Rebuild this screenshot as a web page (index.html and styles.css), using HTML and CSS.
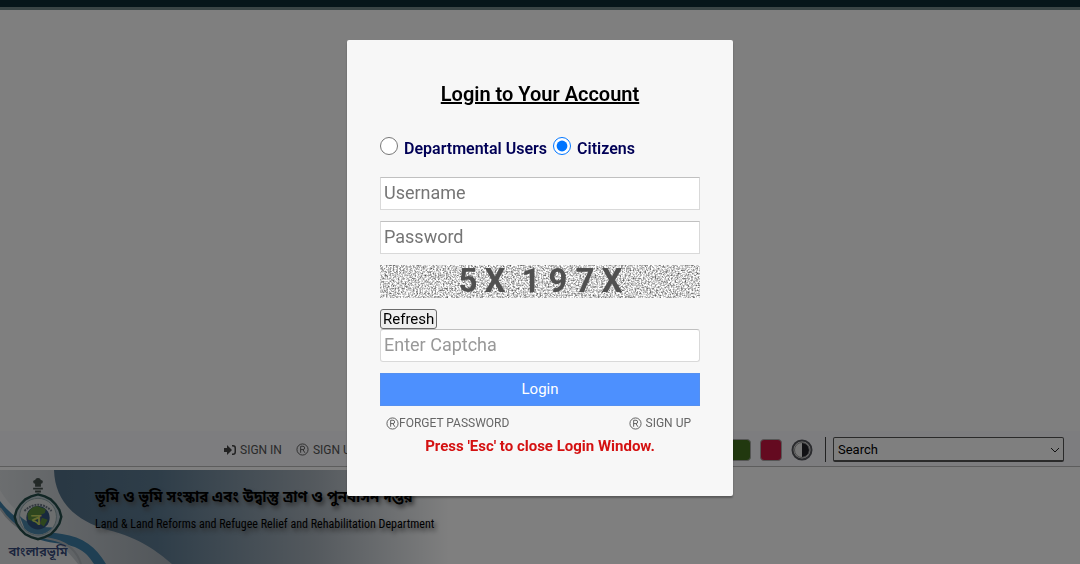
FILE: index.html
```html
<!DOCTYPE html>
<html lang="en">
<head>
  <meta charset="UTF-8" />
  <meta name="viewport" content="width=device-width, initial-scale=1.0"/>
  <title>Banglarbhumi</title>
  <link rel="stylesheet" href="styles.css">
</head>
<body>
  <div class="page">
    <div class="top-strip"></div>
    <div class="hero"></div>

    <nav class="toolbar">
      <div class="account-links">
        <a href="#signin">
          <svg class="sign-icon" viewBox="0 0 12 12"><path d="M0 4h3V1l5 5-5 5V8H0zM8 1h1a3 3 0 0 1 3 3v4a3 3 0 0 1-3 3H8V9.500h1a1.500 1.500 0 0 0 1.500-1.500V4A1.500 1.500 0 0 0 9 2.500H8z"/></svg>
          SIGN IN
        </a>
        <a href="#signup">
          <svg class="reg-icon" viewBox="0 0 14 14"><circle cx="7" cy="7" r="6"/><path d="M5 10.500V3.500h2.500a1.800 1.800 0 0 1 0 3.600H5M7.500 7.100l2 3.400"/></svg>
          SIGN UP
        </a>
      </div>
      <div class="tools">
        <button class="swatch green" aria-label="Green theme"></button>
        <button class="swatch red" aria-label="Red theme"></button>
        <button class="contrast" aria-label="Contrast">
          <svg viewBox="0 0 22 22"><circle cx="11" cy="11" r="9.500" fill="#eee" stroke="#55565c" stroke-width="2"/><circle cx="11" cy="11" r="7.500" fill="none" stroke="#999" stroke-width="1"/><path d="M11 4a7 7 0 0 1 0 14z" fill="#222229"/></svg>
        </button>
        <div class="search-wrap">
          <select class="search" aria-label="Search">
            <option>Search</option>
          </select>
          <svg class="arrow" viewBox="0 0 10 6"><path d="M1 1l4 4 4-4"/></svg>
        </div>
      </div>
    </nav>

    <header class="banner">
      <svg class="banner-art" viewBox="0 0 450 94">
        <defs>
          <linearGradient id="sky" x1="0" x2="1" y1="0" y2="0">
            <stop offset="0" stop-color="#4c6a82"/>
            <stop offset="0.350" stop-color="#5d7b92"/>
            <stop offset="0.700" stop-color="#a9b3bc"/>
            <stop offset="1" stop-color="#fff"/>
          </linearGradient>
          <linearGradient id="mist" x1="0" x2="1" y1="0" y2="0">
            <stop offset="0" stop-color="#d8dcdf"/>
            <stop offset="1" stop-color="#a4adb5"/>
          </linearGradient>
        </defs>
        <rect width="450" height="94" fill="url(#sky)"/>
        <path d="M0 0H54C55 32 76 51 108 60C140 68 158 82 172 94H0z" fill="url(#mist)"/>
        <path d="M0 20C18 52 55 62 78 94H0z" fill="#e4e6e8"/>
        <path d="M0 31C16 52 36 61 62 64C83 67 96 77 106 94H94C86 81 77 75 55 73C28 70 12 55 0 39z" fill="#3e7fa6"/>
        <path d="M0 38C15 62 36 66 55 70C70 74 78 84 81 94" fill="none" stroke="#aeb5ba" stroke-width="2"/>
      </svg>
      <a class="logo" href="#home">
        <svg viewBox="0 0 54 70">
          <g fill="#46524f">
            <circle cx="27" cy="5" r="3"/><circle cx="24" cy="6" r="2"/><circle cx="30" cy="6" r="2"/>
            <path d="M24 7h6v4h-6zM22 12h10v2H22zM24 15h6v2h-6z"/>
          </g>
          <path d="M27 19l7 2 6 3 5 5 4 6 2 7-2 7-4 6-5 5-6 3-7 2-7-2-6-3-5-5-4-6-2-7 2-7 4-6 5-5 6-3z" fill="#b9c7ce" stroke="#244d4b" stroke-width="2.500"/>
          <circle cx="27" cy="42" r="19" fill="#d8dddd" stroke="#90a5a8"/>
          <path d="M8 41c8 8 19 12 34 12a19 19 0 0 1-29 1z" fill="#4a86aa"/>
          <circle cx="27" cy="43" r="12" fill="#31527d"/>
          <path d="M16 39q3-7 10-8l9 3-1 4-6 3-4 6-7-2zM31 43l6 2-4 7-4-3z" fill="#5c8c3c"/>
          <path d="M13 36q14-13 28 0" fill="none" stroke="#687380" stroke-width="2" stroke-dasharray="2 1"/>
          <text x="20" y="50">ব</text>
        </svg>
        <span>বাংলারভূমি</span>
      </a>
      <div class="dept">
        <p class="dept-bn">ভূমি ও ভূমি সংস্কার এবং উদ্বাস্তু ত্রাণ ও পুনর্বাসন দপ্তর</p>
        <p class="dept-en">Land &amp; Land Reforms and Refugee Relief and Rehabilitation Department</p>
      </div>
    </header>
  </div>

  <div class="overlay">
    <form class="login-card" role="dialog" aria-labelledby="loginTitle">
      <h1 id="loginTitle">Login to Your Account</h1>

      <div class="user-type">
        <input type="radio" name="userType" id="dept"><label for="dept">Departmental Users</label>
        <input type="radio" name="userType" id="citizen" checked><label for="citizen">Citizens</label>
      </div>

      <input class="field" type="text" placeholder="Username" aria-label="Username">
      <input class="field" type="password" placeholder="Password" aria-label="Password">

      <div class="captcha">
        <svg class="noise" width="100%" height="100%">
          <filter id="grain" x="0" y="0" width="100%" height="100%" color-interpolation-filters="sRGB">
            <feTurbulence type="fractalNoise" baseFrequency="0.600" numOctaves="2" seed="4"/>
            <feColorMatrix values="0 0 0 1.400 0.120  0 0 0 1.400 0.120  0 0 0 1.400 0.120  0 0 0 0 1"/>
          </filter>
          <rect width="100%" height="100%" filter="url(#grain)"/>
        </svg>
        <span>5</span><span>X</span><span class="gap">1</span><span>9</span><span>7</span><span>X</span>
      </div>

      <button class="refresh" type="button">Refresh</button>
      <input class="field captcha-field" type="text" placeholder="Enter Captcha" aria-label="Enter Captcha">
      <button class="login" type="button">Login</button>

      <div class="card-links">
        <a href="#forget"><svg class="reg-icon" viewBox="0 0 14 14"><circle cx="7" cy="7" r="6"/><path d="M5 10.500V3.500h2.500a1.800 1.800 0 0 1 0 3.600H5M7.500 7.100l2 3.400"/></svg>FORGET PASSWORD</a>
        <a class="spaced" href="#signup"><svg class="reg-icon" viewBox="0 0 14 14"><circle cx="7" cy="7" r="6"/><path d="M5 10.500V3.500h2.500a1.800 1.800 0 0 1 0 3.600H5M7.500 7.100l2 3.400"/></svg>SIGN UP</a>
      </div>
      <p class="hint">Press 'Esc' to close Login Window.</p>
    </form>
  </div>
</body>
</html>
```
FILE: styles.css
```css
* {
  margin: 0;
  padding: 0;
  box-sizing: border-box;
}

body {
  background: #fff;
  font-family: Roboto, sans-serif;
  color: #000;
}

a {
  color: inherit;
  text-decoration: none;
}

.page {
  display: flex;
  flex-direction: column;
  min-height: 100vh;
}

.top-strip {
  height: 10px;
  background: #0c2a34;
  border-bottom: 3px solid #748a8c;
}

.hero {
  flex: 1;
}

.toolbar {
  display: flex;
  justify-content: space-between;
  align-items: center;
  height: 36px;
  padding: 2px 16px 0 224px;
  background: #fafaff;
  border-bottom: 1px solid #bbb;
}

.account-links {
  display: flex;
  gap: 14px;
  font-size: 12px;
  color: #555;
}

.account-links a {
  display: flex;
  align-items: center;
  gap: 4px;
}

.sign-icon {
  width: 12px;
  height: 12px;
  fill: #444;
}

.reg-icon {
  width: 13px;
  height: 13px;
  fill: none;
  stroke: #555;
  stroke-width: 1;
}

.tools {
  display: flex;
  align-items: center;
}

.swatch {
  width: 22px;
  height: 22px;
  margin-right: 9px;
  border: 1px solid #aaa;
  border-radius: 4px;
}

.green {
  background: #42701f;
}

.red {
  background: #c81440;
}

.contrast {
  width: 22px;
  height: 22px;
  margin-right: 12px;
  border: none;
  background: none;
}

.contrast svg {
  display: block;
}

.search-wrap {
  position: relative;
  padding-left: 7px;
  border-left: 1px solid #444;
}

.search {
  display: block;
  width: 231px;
  height: 25px;
  padding-left: 4px;
  appearance: none;
  background: #fff;
  border: 1px solid #555;
  border-bottom-width: 2px;
  border-radius: 2px;
  font: 13px Roboto, sans-serif;
}

.arrow {
  position: absolute;
  right: 4px;
  top: 10px;
  width: 10px;
  height: 6px;
  fill: none;
  stroke: #222;
  pointer-events: none;
}

.banner {
  position: relative;
  display: flex;
  height: 94px;
  margin-top: 3px;
  padding-left: 8px;
}

.banner-art {
  position: absolute;
  left: 0;
  top: 0;
  height: 100%;
}

.logo {
  position: relative;
  display: flex;
  flex-direction: column;
  align-items: center;
  width: 60px;
  padding-top: 6px;
  font: 600 13px/18px "Noto Sans Bengali", "Noto Sans", sans-serif;
  color: #34487a;
}

.logo svg {
  width: 54px;
  height: 68px;
}

.logo text {
  fill: #cbd660;
  font-size: 17px;
}

.dept {
  position: relative;
  padding: 14px 0 0 27px;
  white-space: nowrap;
  text-shadow: 2px 3px 4px #555;
}

.dept-bn {
  font: bold 15px/28px "Noto Sans Bengali", "Noto Sans", sans-serif;
}

.dept-en {
  font: 12px/24px "Roboto Condensed", "Open Sans Condensed", Roboto, sans-serif;
}

.overlay {
  position: fixed;
  inset: 0;
  display: flex;
  justify-content: center;
  align-items: flex-start;
  padding-top: 40px;
  background: rgba(0, 0, 0, 0.5);
}

.login-card {
  display: flex;
  flex-direction: column;
  width: 386px;
  max-width: 100%;
  padding: 40px 33px;
  background: #f7f7f7;
  border-radius: 2px;
  box-shadow: 0 2px 2px rgba(0, 0, 0, 0.3);
}

h1 {
  margin-bottom: 28px;
  font-size: 20px;
  font-weight: 600;
  line-height: 28px;
  text-align: center;
  text-decoration: underline;
}

.user-type {
  display: flex;
  align-items: center;
  height: 24px;
  margin-bottom: 17px;
  color: #000056;
  font-size: 16px;
  font-weight: 600;
}

.user-type input {
  width: 18px;
  height: 18px;
  margin-bottom: 4px;
}

.user-type label {
  margin: 0 6px;
}

.field {
  width: 100%;
  height: 33px;
  margin-bottom: 11px;
  padding: 0 3px 2px;
  background: #fff;
  border: 1px solid #d9d9d9;
  border-top-color: #c0c0c0;
  font: 18px Roboto, sans-serif;
}

.field::placeholder {
  color: #757575;
}

.captcha {
  position: relative;
  display: flex;
  justify-content: center;
  height: 33px;
  margin-bottom: 11px;
  color: #505050;
  font-size: 33px;
  font-weight: 700;
  line-height: 32px;
}

.captcha span {
  position: relative;
  width: 27px;
  text-align: center;
}

.captcha .gap {
  margin-left: 9px;
}

.noise {
  position: absolute;
  left: 0;
  top: 0;
}

.refresh {
  align-self: flex-start;
  height: 20px;
  padding: 0 2px 2px;
  background: #efefef;
  border: 1px solid #6b6b6b;
  border-radius: 3px;
  font: 15px Roboto, sans-serif;
}

.captcha-field {
  border-radius: 3px;
}

.captcha-field::placeholder {
  color: #999;
}

.login {
  height: 33px;
  padding-bottom: 2px;
  background: #4d90fe;
  border: 1px solid #5590f0;
  color: #fff;
  font: 15px Roboto, sans-serif;
}

.card-links {
  display: flex;
  justify-content: space-between;
  padding: 8px 9px 0 6px;
  color: #666;
  font-size: 12px;
  line-height: 18px;
}

.card-links a {
  display: flex;
  align-items: center;
}

.card-links .spaced {
  gap: 4px;
}

.hint {
  margin-top: 4px;
  color: #d41111;
  font-size: 15px;
  font-weight: 700;
  line-height: 20px;
  text-align: center;
}
```
